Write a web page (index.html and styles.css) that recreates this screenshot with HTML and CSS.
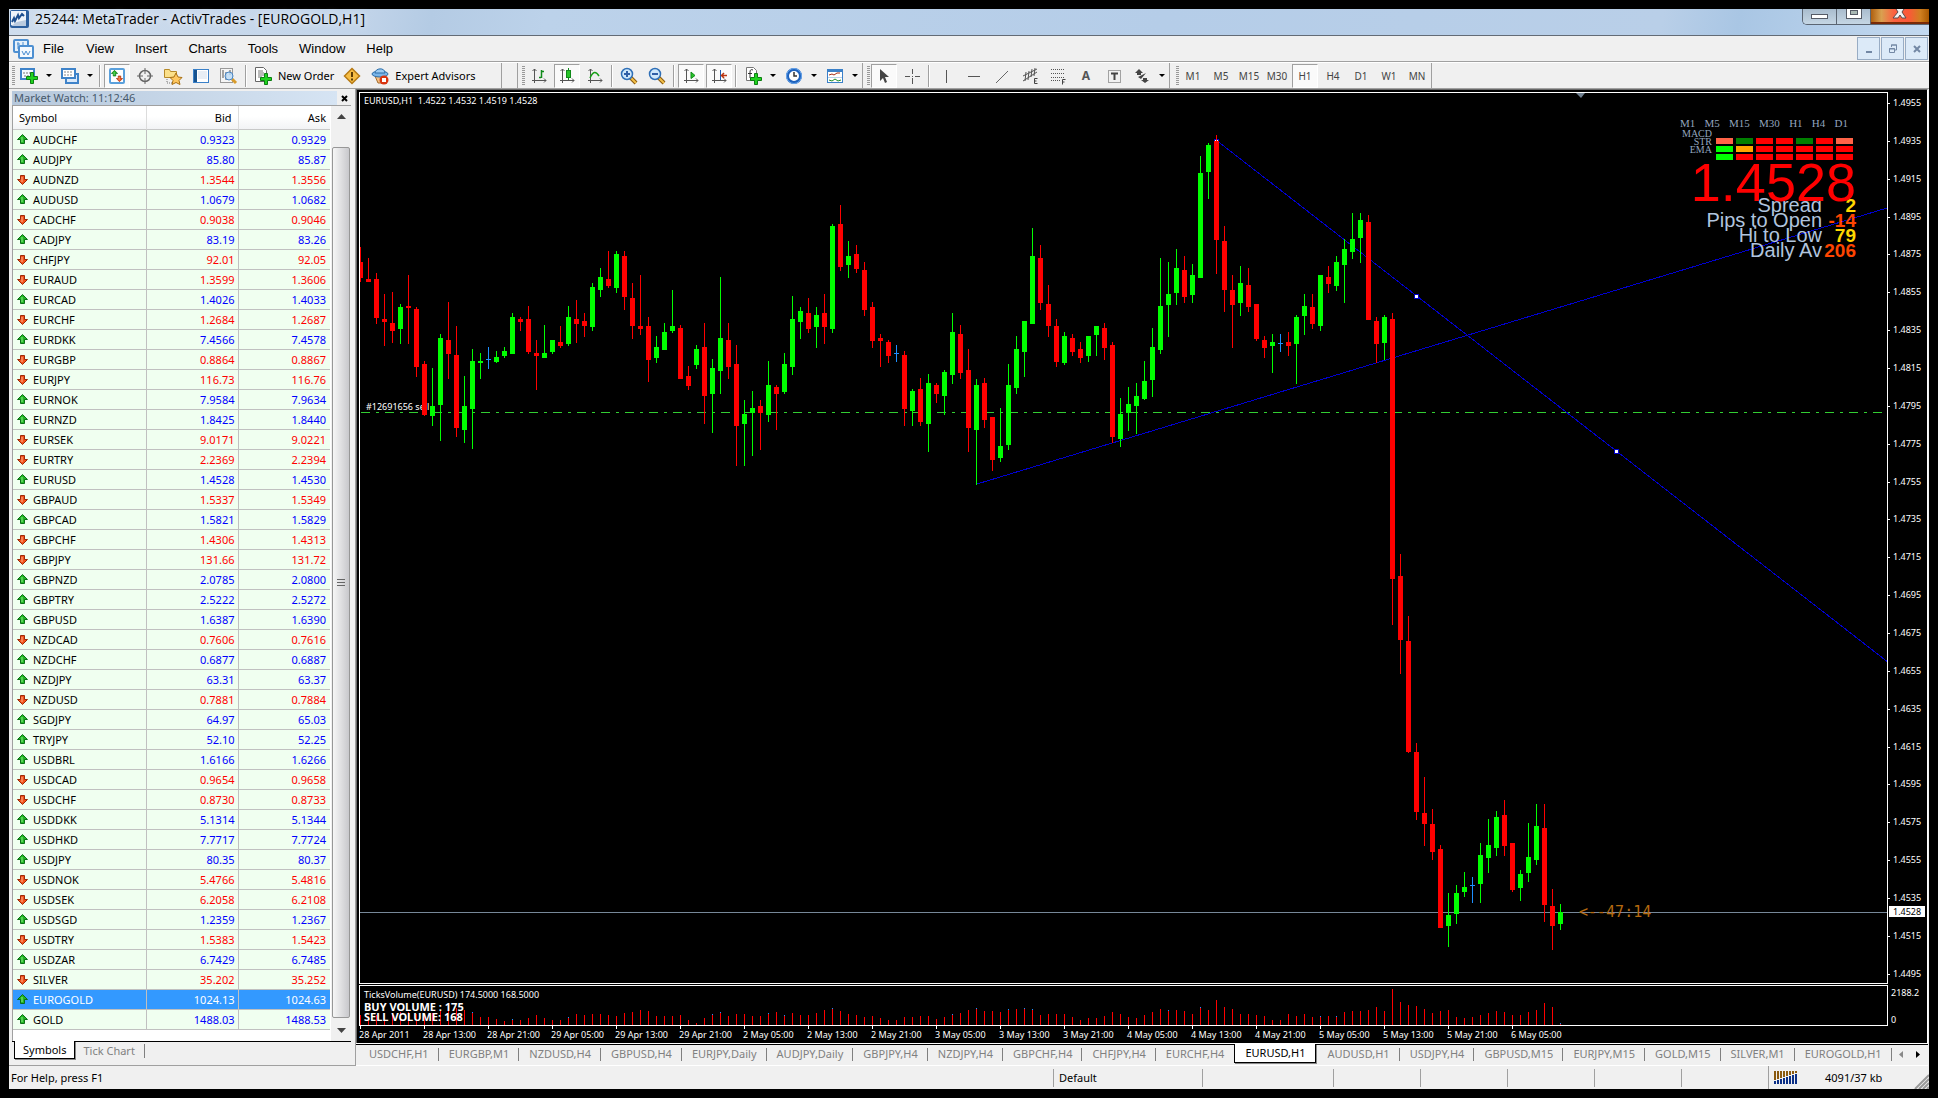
FILE: index.html
```html
<!DOCTYPE html>
<html lang="en">
<head>
<meta charset="utf-8">
<title>25244: MetaTrader - ActivTrades - [EUROGOLD,H1]</title>
<link rel="stylesheet" href="styles.css">
</head>
<body>
<svg class="defs" aria-hidden="true">
  <defs>
    <symbol id="up" viewBox="0 0 11 11"><path d="M5.500 .5 10.500 5.500H7.500V9.500H3.500V5.500H.5Z" fill="#22b522" stroke="#0b6e16"/><path d="M5 3v5" stroke="#8dee8d"/></symbol>
    <symbol id="down" viewBox="0 0 11 11"><path d="M5.500 10.500 .5 5.500H3.500V1.500H7.500V5.500H10.500Z" fill="#f2511b" stroke="#9c2b08"/><path d="M5 3v5" stroke="#ffb48d"/></symbol>
    <symbol id="plus" viewBox="0 0 12 12"><path d="M4.500 .5h3v4h4v3h-4v4h-3v-4h-4v-3h4z" fill="#1fd21f" stroke="#0c7d12"/></symbol>
    <symbol id="axes" viewBox="0 0 16 16"><path d="M3.500 1v14M1 12.500h14M1.500 3l2-2 2 2M13 10.500l2 2-2 2" fill="none" stroke="#555"/></symbol>
    <symbol id="lens" viewBox="0 0 18 18"><path d="M10.500 10.500l5.500 5.500" stroke="#8a5a10" stroke-width="4"/><path d="M10.500 10.500l5.500 5.500" stroke="#f3c04a" stroke-width="2"/><circle cx="7" cy="7" r="5.500" fill="#cfe8fb" stroke="#2f6fb7" stroke-width="1.500"/></symbol>
  </defs>
</svg>
<div class="window">
  <header class="titlebar">
    <svg class="app-icon" width="20" height="18" viewBox="0 0 20 18"><rect x="0" y="0" width="19" height="18" rx="2" fill="#2b5f9e"/><rect x="1" y="1" width="15" height="14" fill="#eef4fa"/><path d="M2 12l2-4 1 3 3-6 1 3 3-4 2 2" fill="none" stroke="#1d4f8f" stroke-width="2"/><path d="M1 16l6-4 9-2v6H1z" fill="#b9cbe0"/></svg>
    <h1 class="title">25244: MetaTrader - ActivTrades - [EUROGOLD,H1]</h1>
    <div class="win-buttons">
      <button class="win-btn" aria-label="Minimize"><svg width="18" height="14"><rect x=".5" y="5.500" width="16" height="4" fill="#fff" stroke="#555b66"/></svg></button>
      <button class="win-btn" aria-label="Maximize"><svg width="18" height="14"><rect x="1.500" y="-3.500" width="15" height="13" fill="#fff" stroke="#555b66"/><rect x="5.500" y="1.500" width="7" height="4" fill="#a9b9b4" stroke="#555b66"/></svg></button>
      <button class="win-btn win-close" aria-label="Close"><svg width="18" height="14"><path d="M3-3h4l2 3 2-3h4l-4 6 4 6h-4l-2-3-2 3H2l5-6z" fill="#f2f2f2" stroke="#5a4a4a"/></svg></button>
    </div>
  </header>

  <nav class="menubar">
    <svg class="menu-icon" width="22" height="20" viewBox="0 0 22 20"><rect x="1" y="1" width="14" height="12" rx="1" fill="#e6f1fb" stroke="#4d8fd1" stroke-width="2"/><path d="M5 3v7M10 3v7M4 5h3M9 8h3" stroke="#4d8fd1"/><rect x="6" y="7" width="14" height="12" rx="1" fill="#f4f9fe" stroke="#4d8fd1" stroke-width="2"/><path d="M9 12l2 4 2-4 2 4 2-4" fill="none" stroke="#4d8fd1"/></svg>
    <button class="menu">File</button><button class="menu">View</button><button class="menu">Insert</button><button class="menu">Charts</button><button class="menu">Tools</button><button class="menu">Window</button><button class="menu">Help</button>
    <div class="mdi">
      <button class="mdi-btn" aria-label="Minimize chart"><svg width="12" height="12"><path d="M3 9h6" stroke="#7388a5" stroke-width="2"/></svg></button>
      <button class="mdi-btn" aria-label="Restore chart"><svg width="12" height="12"><path d="M4.500 4v-2h5v5h-2M4 2h6M2.500 5.500h5v4h-5zM2 6h6" fill="none" stroke="#7388a5"/></svg></button>
      <button class="mdi-btn" aria-label="Close chart"><svg width="12" height="12"><path d="M3 3l6 6M9 3l-6 6" stroke="#7388a5" stroke-width="2"/></svg></button>
    </div>
  </nav>

  <div class="toolbars">
    <div class="toolbar toolbar-main">
      <i class="grip"></i>
      <button class="tool" aria-label="New chart"><svg width="20" height="18" viewBox="0 0 20 18"><rect x="2" y="2" width="13" height="10" fill="#f4f9ff" stroke="#3f83c9" stroke-width="2"/><path d="M4 6h8M5 9h6" stroke="#777" stroke-dasharray="2 1"/><use href="#plus" x="7" y="5" width="12" height="12"/></svg></button><button class="caret" aria-label="Chart list"></button>
      <button class="tool" aria-label="Profiles"><svg width="20" height="18" viewBox="0 0 20 18"><rect x="6" y="7" width="12" height="9" fill="#dceafa" stroke="#3f83c9" stroke-width="2"/><rect x="2" y="2" width="13" height="9" fill="#fff" stroke="#3f83c9" stroke-width="2"/><path d="M4 5h8M4 8h8" stroke="#888" stroke-dasharray="2 1"/></svg></button><button class="caret" aria-label="Profile list"></button>
      <i class="sep"></i>
      <button class="tool on" aria-label="Market Watch"><svg width="18" height="18" viewBox="0 0 18 18"><rect x="2" y="2" width="14" height="14" rx="1" fill="#fff" stroke="#5aa0dc" stroke-width="2"/><use href="#up" x="3" y="3" width="7" height="7"/><use href="#down" x="8" y="8" width="7" height="7"/></svg></button>
      <button class="tool" aria-label="Data Window"><svg width="18" height="18" viewBox="0 0 18 18"><circle cx="9" cy="9" r="5.500" fill="none" stroke="#666" stroke-width="1.500"/><path d="M9 1v6M9 11v6M1 9h6M11 9h6" stroke="#666"/></svg></button>
      <button class="tool" aria-label="Navigator"><svg width="20" height="18" viewBox="0 0 20 18"><path d="M1.500 2.500h5l1 2h6v6h-12z" fill="#fbe08a" stroke="#b68a2a"/><path d="M4 12v4h5" fill="none" stroke="#777" stroke-dasharray="1 1"/><path d="M13 6l2 4 4 .5-3 3 1 4-4-2-4 2 1-4-3-3 4-.5z" fill="#ffc860" stroke="#a86f12"/></svg></button>
      <button class="tool" aria-label="Terminal"><svg width="18" height="18" viewBox="0 0 18 18"><rect x="1.500" y="2.500" width="15" height="13" fill="#fff" stroke="#3a80c8"/><path d="M3.500 3v12" stroke="#16528f" stroke-width="3"/><path d="M6 5h9M6 7h9M6 9h9M6 11h9" stroke="#cfdcea"/></svg></button>
      <button class="tool" aria-label="Strategy Tester"><svg width="20" height="18" viewBox="0 0 20 18"><rect x="1.500" y="1.500" width="12" height="14" fill="#f5f5f5" stroke="#999"/><path d="M4 3v8M7 5v8M11 3v5" stroke="#555"/><path d="M13 12l4 4" stroke="#d89b2b" stroke-width="3"/><circle cx="10" cy="9" r="4" fill="#bcdcf7" fill-opacity=".8" stroke="#4a86c4"/></svg></button>
      <i class="sep"></i>
      <button class="tool wide"><svg width="20" height="18" viewBox="0 0 20 18"><path d="M2.500.5h8l3 3v11h-11z" fill="#fff" stroke="#666"/><path d="M5 4h5M5 6h6M5 8h6M5 10h4" stroke="#777"/><use href="#plus" x="7" y="6" width="12" height="12"/></svg>New Order</button>
      <button class="tool" aria-label="MetaEditor"><svg width="18" height="18" viewBox="0 0 18 18"><path d="M9 1.500 16.500 9 9 16.500 1.500 9z" fill="#f6bd45" stroke="#b77a15" stroke-width="1.500"/><path d="M9 5v5M9 11.500v2" stroke="#5d3c05" stroke-width="2"/></svg></button>
      <button class="tool wide"><svg width="20" height="18" viewBox="0 0 20 18"><path d="M5 9h11l-3 7H8z" fill="#f3c083" stroke="#a46a2a"/><ellipse cx="10" cy="7" rx="8" ry="3" fill="#79b5e8" stroke="#2c6da8"/><path d="M5 6c0-5 10-6 10 0z" fill="#9ccbf2" stroke="#2c6da8"/><circle cx="14" cy="13" r="4.500" fill="#d93410"/><rect x="12" y="11" width="4" height="4" fill="#fff"/></svg>Expert Advisors</button>
    </div>
    <div class="toolbar">
      <i class="grip"></i>
      <button class="tool" aria-label="Bar chart"><svg width="16" height="16" viewBox="0 0 16 16"><use href="#axes" width="16" height="16"/><path d="M10.500 2v8M8 9.500h2M11 3.500h2" stroke="#108a1a" stroke-width="1.500"/></svg></button>
      <button class="tool on" aria-label="Candlesticks"><svg width="16" height="16" viewBox="0 0 16 16"><use href="#axes" width="16" height="16"/><path d="M9.500 0v12" stroke="#108a1a"/><rect x="7.500" y="2.500" width="4" height="7" fill="#27c427" stroke="#108a1a"/></svg></button>
      <button class="tool" aria-label="Line chart"><svg width="16" height="16" viewBox="0 0 16 16"><use href="#axes" width="16" height="16"/><path d="M3 10c3-7 6-7 9-2" fill="none" stroke="#18a018" stroke-width="1.500"/></svg></button>
      <i class="sep"></i>
      <button class="tool" aria-label="Zoom in"><svg width="18" height="18" viewBox="0 0 18 18"><use href="#lens" width="18" height="18"/><path d="M4 7h6M7 4v6" stroke="#2f5fa7" stroke-width="2"/></svg></button>
      <button class="tool" aria-label="Zoom out"><svg width="18" height="18" viewBox="0 0 18 18"><use href="#lens" width="18" height="18"/><path d="M4 7h6" stroke="#2f5fa7" stroke-width="2"/></svg></button>
      <i class="sep"></i>
      <button class="tool on" aria-label="Auto scroll"><svg width="16" height="16" viewBox="0 0 16 16"><use href="#axes" width="16" height="16"/><path d="M8 4l4 3.500-4 3z" fill="#27c427" stroke="#108a1a"/></svg></button>
      <button class="tool on" aria-label="Chart shift"><svg width="16" height="16" viewBox="0 0 16 16"><use href="#axes" width="16" height="16"/><path d="M9.500 2v10" stroke="#1b5bb0"/><path d="M11 7.500h5M13 5l-2.500 2.500 2.500 2.500" fill="none" stroke="#b83410" stroke-width="1.500"/></svg></button>
      <i class="sep"></i>
      <button class="tool" aria-label="Indicators"><svg width="18" height="18" viewBox="0 0 18 18"><path d="M2.500.5h7l3 3v10h-10z" fill="#fff" stroke="#777"/><path d="M9 3c-2-1-3 0-3 2v6M4 6.500h4" fill="none" stroke="#333"/><use href="#plus" x="6" y="6" width="12" height="12"/></svg></button><button class="caret" aria-label="Indicator list"></button>
      <button class="tool" aria-label="Periods"><svg width="18" height="18" viewBox="0 0 18 18"><circle cx="9" cy="9" r="6.500" fill="#fff" stroke="#1e62bd" stroke-width="3"/><circle cx="9" cy="9" r="7.500" fill="none" stroke="#6aa8ee"/><path d="M9 5v4h3" fill="none" stroke="#333" stroke-width="1.500"/></svg></button><button class="caret" aria-label="Period list"></button>
      <button class="tool" aria-label="Templates"><svg width="18" height="16" viewBox="0 0 18 16"><rect x="1.500" y="1.500" width="15" height="13" fill="#fff" stroke="#3a80c8"/><path d="M1 3h16" stroke="#3a80c8" stroke-width="2"/><path d="M2 9.500h14" stroke="#b9d2ea"/><path d="M3 7l3-1 2 1 3-2 3 0" fill="none" stroke="#a32c16"/><path d="M3 12l3 1 3-2 3 2 3-1" fill="none" stroke="#1f8f2a"/></svg></button><button class="caret" aria-label="Template list"></button>
    </div>
    <div class="toolbar">
      <i class="grip"></i>
      <button class="tool on" aria-label="Cursor"><svg width="12" height="16" viewBox="0 0 12 16"><path d="M2 1v12l3-3 2 5 2-1-2-5h4z" fill="#444"/></svg></button>
      <button class="tool" aria-label="Crosshair"><svg width="16" height="16" viewBox="0 0 16 16"><path d="M8.500 1v5M8.500 10v6M1 8.500h5M11 8.500h5M8 8.500h1" stroke="#555"/></svg></button>
      <i class="sep"></i>
      <button class="tool" aria-label="Vertical line"><svg width="16" height="16"><path d="M8.500 2v13" stroke="#555"/></svg></button>
      <button class="tool" aria-label="Horizontal line"><svg width="16" height="16"><path d="M2 8.500h12" stroke="#555"/></svg></button>
      <button class="tool" aria-label="Trendline"><svg width="16" height="16"><path d="M2 15L14 3" stroke="#666"/></svg></button>
      <button class="tool" aria-label="Equidistant channel"><svg width="17" height="18" viewBox="0 0 17 18"><path d="M1 9l14-7M1 14l14-9M4 5l-1 9M7 4l-1 9M10 2l-1 8M13 1l-1 8" stroke="#555"/><path d="M15.500 11.500h-3v5h3M12.500 14h2" fill="none" stroke="#444"/></svg></button>
      <button class="tool" aria-label="Fibonacci retracement"><svg width="17" height="18" viewBox="0 0 17 18"><path d="M1 2.500h14M1 6.500h14M1 10.500h14M1 13.500h9" stroke="#555" stroke-dasharray="1 1"/><path d="M15.500 12.500h-3v5M12.500 15h2" fill="none" stroke="#444"/></svg></button>
      <button class="tool letter">A</button>
      <button class="tool" aria-label="Text label"><svg width="16" height="16" viewBox="0 0 16 16"><rect x="2.500" y="2.500" width="12" height="12" fill="none" stroke="#555" stroke-dasharray="1 1"/><path d="M5 5.500h7M8.500 5v7" stroke="#444" stroke-width="2"/></svg></button>
      <button class="tool" aria-label="Arrows"><svg width="16" height="16" viewBox="0 0 16 16"><path d="M5 1l4 4H7v2H3V5H1zM11 15l-4-3h2v-2h4v2h2zM4 9l3 2 5-6" fill="#444"/></svg></button><button class="caret" aria-label="Arrow list"></button>
    </div>
    <div class="toolbar periods">
      <i class="grip"></i>
      <button class="tool">M1</button><button class="tool">M5</button><button class="tool">M15</button><button class="tool">M30</button><button class="tool on">H1</button><button class="tool">H4</button><button class="tool">D1</button><button class="tool">W1</button><button class="tool">MN</button>
    </div>
  </div>

  <main class="workspace">
    <aside class="watch">
      <div class="watch-title"><h2>Market Watch: 11:12:46</h2><button class="watch-close" aria-label="Close Market Watch"><svg width="7" height="7"><path d="M1 1l5 5M6 1l-5 5" stroke="#000" stroke-width="2"/></svg></button></div>
      <div class="watch-body">
        <div class="quotes-wrap">
          <table class="quotes">
            <thead><tr><th>Symbol</th><th>Bid</th><th>Ask</th></tr></thead>
            <tbody id="quotes"></tbody>
          </table>
        </div>
        <div class="scroll">
          <svg width="9" height="5"><path d="M0 5l4.500-5L9 5z" fill="#444"/></svg>
          <div class="thumb"><i></i></div>
          <svg width="9" height="5"><path d="M0 0l4.500 5L9 0z" fill="#444"/></svg>
        </div>
      </div>
      <div class="watch-tabs"><button class="wtab current">Symbols</button><button class="wtab">Tick Chart</button></div>
    </aside>

    <section class="charts">
      <div class="chart">
        <div class="pane price-pane">
          <svg class="plot" id="price-plot"></svg>
          <div class="caption">EURUSD,H1&nbsp; 1.4522 1.4532 1.4519 1.4528</div>
          <div class="hud">
            <div class="hud-frames"><span>M1</span><span>M5</span><span>M15</span><span>M30</span><span>H1</span><span>H4</span><span>D1</span></div>
            <div class="hud-signals">
              <div class="hud-names"><span>MACD</span><span>STR</span><span>EMA</span></div>
              <div class="hud-cells">
                <i class="tomato"></i><i class="green"></i><i></i><i></i><i class="green"></i><i></i><i class="tomato"></i>
                <i class="lime"></i><i class="orange"></i><i></i><i></i><i></i><i></i><i></i>
                <i class="lime"></i><i></i><i></i><i></i><i></i><i></i><i></i>
              </div>
            </div>
            <div class="hud-price">1.4528</div>
            <dl class="hud-stats">
              <dt>Spread</dt><dd class="gold">2</dd>
              <dt>Pips to Open</dt><dd>-14</dd>
              <dt>Hi to Low</dt><dd class="gold">79</dd>
              <dt>Daily Av</dt><dd>206</dd>
            </dl>
          </div>
        </div>
        <div class="price-axis" id="price-axis"><span class="bid-tag">1.4528</span></div>
        <div class="pane volume-pane">
          <svg class="plot" id="volume-plot"></svg>
          <div class="caption">TicksVolume(EURUSD) 174.5000 168.5000</div>
          <div class="volumes"><span>BUY VOLUME : 175</span><span>SELL VOLUME: 168</span></div>
        </div>
        <div class="volume-axis"><span>2188.2</span><span>0</span></div>
        <div class="time-axis" id="time-axis"></div>
      </div>
      <nav class="chart-tabs">
        <button>USDCHF,H1</button><button>EURGBP,M1</button><button>NZDUSD,H4</button><button>GBPUSD,H4</button><button>EURJPY,Daily</button><button>AUDJPY,Daily</button><button>GBPJPY,H4</button><button>NZDJPY,H4</button><button>GBPCHF,H4</button><button>CHFJPY,H4</button><button class="before">EURCHF,H4</button><button class="current">EURUSD,H1</button><button>AUDUSD,H1</button><button>USDJPY,H4</button><button>GBPUSD,M15</button><button>EURJPY,M15</button><button>GOLD,M15</button><button>SILVER,M1</button><button>EUROGOLD,H1</button>
        <span class="tab-arrows"><svg width="4" height="7"><path d="M4 0v7L0 3.500z" fill="#888"/></svg><svg width="4" height="7"><path d="M0 0v7l4-3.500z" fill="#000"/></svg></span>
      </nav>
    </section>
  </main>

  <footer class="status">
    <span class="help">For Help, press F1</span>
    <span class="s-profile">Default</span><span class="s-date"></span><span class="s-price"></span><span class="s-price"></span><span class="s-price"></span><span class="s-price"></span><span class="s-price"></span>
    <span class="s-net"><svg width="24" height="13" viewBox="0 0 24 13"><path d="M1 0v9M4 0v8M7 0v7M10 0v6M13 0v5M16 0v4M19 0v3M22 0v2" stroke="#8a5a10" stroke-width="2"/><path d="M1 10v3M4 9v4M7 8v5M10 7v6M13 6v7M16 5v8M19 4v9M22 3v10" stroke="#0b2f86" stroke-width="2"/></svg>4091/37 kb<svg class="resize" width="15" height="15"><path d="M1 15L15 1M5 15L15 5M9 15l6-6M13 15l2-2" stroke="#999" stroke-width="2"/></svg></span>
  </footer>
</div>
<script src="chart.js"></script>
</body>
</html>
```
FILE: styles.css
```css
* { box-sizing: border-box; }
body {
  margin: 0; padding: 9px; min-height: 100vh; background: #000; color: #000;
  display: flex; font: 11px/14px "Noto Sans", "Open Sans", sans-serif;
}
button { font: inherit; color: inherit; background: none; border: 0; padding: 0; margin: 0; }
h1, h2, dl, dd { margin: 0; font-weight: normal; }
svg { display: block; flex: none; }
.defs { position: absolute; width: 0; height: 0; }
.window { flex: 1; min-width: 0; display: flex; flex-direction: column; background: #f0f0f0; }

.titlebar {
  height: 27px; display: flex; align-items: flex-start; border-bottom: 1px solid #636b75;
  background: linear-gradient(100deg, #cfdded 0, #c3d5ea 18%, #b4cbe4 22%, #bcd2ea 28%, #b5cde8 60%, #b9cfe8 86%, #a9c6e4 90%, #c3d9f0 100%);
}
.app-icon { margin: 1px 0 0 1px; }
.title { padding: 0 8px; margin-left: -3px; font-family: "Open Sans", "Noto Sans", sans-serif; font-size: 14px; line-height: 20px; text-shadow: 0 0 6px #fff; }
.win-buttons { margin-left: auto; display: flex; height: 16px; border: 1px solid #5b6572; border-top: 0; border-right: 0; border-radius: 0 0 0 5px; overflow: hidden; }
.win-btn { width: 34px; display: flex; justify-content: center; background: linear-gradient(#a9bccd, #c5d6e4); border-right: 1px solid #5b6572; }
.win-close { width: 58px; border-right: 0; background: linear-gradient(90deg, #b06010, #d9a050 18%, #fb6040 40%, #fb5838 65%, #d08020 85%, #a85800); border-bottom: 2px solid #7a2a08; }

.menubar { height: 26px; display: flex; align-items: center; border-bottom: 1px solid #a0a0a0; font-family: "Liberation Sans", Arial, sans-serif; font-size: 13px; }
.menu-icon { margin: 0 0 0 4px; }
.menu { padding: 0 10px; margin-right: 1px; }
.menu-icon + .menu { margin-left: -2px; margin-right: 2px; }
.mdi { margin-left: auto; display: flex; gap: 1px; padding-right: 1px; }
.mdi-btn { width: 23px; height: 23px; display: grid; place-items: center; background: #dceaf8; border: 1px solid #98acc4; }

.toolbars { height: 27px; display: flex; border-top: 1px solid #fff; border-bottom: 1px solid #a0a0a0; }
.toolbar { display: flex; align-items: center; border-right: 1px solid #a0a0a0; padding-left: 4px; white-space: nowrap; }
.toolbar-main { flex: 0 0 493px; margin-right: 15px; padding-left: 3px; }
.toolbar-main + .toolbar { border-left: 1px solid #a0a0a0; }
.toolbar + .periods { margin-left: 2px; }
.grip { width: 3px; height: 20px; background: repeating-linear-gradient(#999 0 1px, #f0f0f0 1px 2px); }
.sep { width: 2px; height: 22px; margin: 0 2px; border-left: 1px solid #a0a0a0; border-right: 1px solid #fff; }
.tool { width: 26px; height: 24px; margin: 0 1px; display: flex; align-items: center; justify-content: center; border: 1px solid transparent; }
.tool.on { background: #fafafa; border-color: #a0a0a0 #fff #fff #a0a0a0; }
.tool.wide { width: auto; padding: 0 2px; gap: 5px; }
.caret { width: 12px; height: 24px; margin-right: 1px; display: grid; place-items: center; }
.caret::before { content: ""; border: 3px solid transparent; border-top: 3px solid #000; border-bottom: 0; }
.letter { font-weight: bold; font-size: 12px; color: #555; }
.periods { font-size: 10px; color: #444; }

.workspace { flex: 1; display: flex; min-height: 0; }
.watch { flex: 0 0 346px; display: flex; flex-direction: column; padding: 2px 4px 2px 3px; border-bottom: 1px solid #a0a0a0; }
.watch-title { display: flex; height: 14px; align-items: center; }
.watch-title h2 { flex: 1; padding-left: 2px; font-size: 11px; line-height: 14px; color: #46586a; background: linear-gradient(90deg, #b6c8dc, #d6e4f3); }
.watch-close { width: 14px; display: grid; place-items: center; }
.watch-body { flex: 1; display: flex; border-top: 1px solid #a0a0a0; border-left: 1px solid #a0a0a0; background: #fff; }
.quotes-wrap { flex: 1; }
.quotes { width: 100%; table-layout: fixed; border-collapse: separate; border-spacing: 0; }
.quotes th { height: 24px; padding: 0 6px; font-weight: normal; text-align: right; background: linear-gradient(#fff 45%, #f2f3f5); border-right: 1px solid #dcdcdc; border-bottom: 1px solid #c8c8c8; }
.quotes th:first-child { width: 134px; text-align: left; }
.quotes td { height: 20px; padding: 0 3px 0 4px; text-align: right; background: #f0fff0; border-right: 1px solid #c0c0c0; border-bottom: 1px solid #c0c0c0; color: #00f; }
.quotes th:last-child, .quotes td:last-child { border-right: 0; padding-right: 4px; }
.quotes td:first-child { text-align: left; color: #000; }
.quotes .fall td + td { color: #f00; }
.quotes .selected td, .quotes .selected td:first-child { background: #3399ff; color: #fff; }
.symbol { display: flex; align-items: center; gap: 5px; }
.scroll { width: 20px; margin-left: 1px; padding: 8px 0 8px; background: #f0f0f0; display: flex; flex-direction: column; align-items: center; }
.thumb { flex: 1; width: 18px; margin: 28px 0 10px; border: 1px solid #979797; border-radius: 2px; background: linear-gradient(90deg, #f6f6f6, #e2e2e4 45%, #c8c8cc); display: grid; place-items: center; }
.thumb i { width: 8px; height: 8px; background: repeating-linear-gradient(#666 0 1px, transparent 1px 3px); }
.watch-tabs { height: 22px; display: flex; align-items: flex-start; border-top: 1px solid #000; color: #808080; }
.wtab { height: 14px; padding: 0 9px 0 8px; margin-top: 2px; border-right: 1px solid #808080; }
.wtab.current { height: 18px; margin: -1px 0 0 2px; padding: 0 8px; line-height: 18px; color: #000; background: #fff; border: 1px solid #000; border-top: 0; box-shadow: 1px 1px 0 #888; }

.charts { flex: 1; min-width: 0; display: flex; flex-direction: column; border-left: 1px solid #a0a0a0; padding-right: 1px; }
.chart {
  flex: 1; display: grid; grid-template-columns: 1fr 39px; grid-template-rows: 1fr 41px 16px; row-gap: 1px;
  background: #000; color: #fff; padding: 2px 0 0 2px; border-top: 1px solid #696969; border-left: 1px solid #696969; border-right: 1px solid #fff;
  font-size: 9px; line-height: 12px;
}
.pane { position: relative; border: 1px solid #fff; overflow: hidden; }
.plot { position: absolute; left: 0; top: 0; width: 100%; height: 100%; }
.caption { position: absolute; left: 4px; top: 2px; white-space: pre; }
.volume-pane .caption { top: 3px; }
.volumes { position: absolute; left: 4px; top: 16px; display: flex; flex-direction: column; font-size: 11px; line-height: 10px; font-weight: bold; }
.price-axis { position: relative; padding: 5px 0 4px 5px; display: flex; flex-direction: column; justify-content: space-between; }
.price-axis > span:not(.bid-tag)::before { content: ""; float: left; width: 2px; height: 1px; margin: 6px 0 0 -5px; background: #fff; }
.bid-tag { position: absolute; left: 1px; bottom: 67px; width: 36px; padding-left: 4px; line-height: 11px; background: #fff; color: #000; }
.volume-axis { padding: 2px 0 0 3px; display: flex; flex-direction: column; justify-content: space-between; }
.time-axis { grid-column: 1 / -1; display: flex; overflow: hidden; margin-top: -1px; }
.time-axis span { flex: 0 0 64px; white-space: nowrap; }
.time-axis span::before { content: ""; display: block; width: 1px; height: 3px; margin-left: 1px; background: #fff; }

.hud { position: absolute; top: 23px; right: 31px; width: 180px; text-align: right; font-family: "Liberation Sans", Arial, sans-serif; color: #b0c4de; }
.hud-frames { display: flex; justify-content: space-between; padding: 0 8px 0 4px; font: 11px/14px "Liberation Serif", serif; color: #93a5bf; }
.hud-signals { display: flex; justify-content: flex-end; gap: 4px; padding-right: 3px; }
.hud-names { display: flex; flex-direction: column; font: 10px/8px "Liberation Serif", serif; color: #93a5bf; }
.hud-cells { display: grid; grid-template-columns: repeat(7, 17px); grid-auto-rows: 6px; gap: 2px 3px; padding-top: 8px; }
.hud-cells i { background: #f00; }
.hud-cells .tomato { background: #ff6347; }
.hud-cells .green { background: #008000; }
.hud-cells .lime { background: #0f0; }
.hud-cells .orange { background: #ffa500; }
.hud-price { position: relative; z-index: 1; font-size: 54px; line-height: 45px; color: #f00; }
.hud-stats { display: grid; grid-template-columns: 1fr 34px; font-size: 20px; line-height: 15px; margin-top: -7px; }
.hud-stats dd { font-size: 19px; font-weight: bold; color: #ff4500; display: flex; justify-content: flex-end; }
.hud-stats .gold { color: #ffd700; }

.up { fill: #0f0; } .dn { fill: #f00; } .doji { fill: #1e90ff; }
.trend { stroke: #0000cd; shape-rendering: crispEdges; }
.handle { fill: #fff; stroke: #0000cd; }
.order { stroke: #32cd32; stroke-dasharray: 9 6 3 6; }
.bid { stroke: #778899; }
.order-text { fill: #fff; font-size: 9px; }
.timer { fill: #b5690f; font: 15px "DejaVu Sans Mono", monospace; }
.shift { fill: #708090; }

.chart-tabs { height: 23px; display: flex; border-top: 1px solid #fff; border-bottom: 1px solid #fff; color: #808080; white-space: nowrap; position: relative; padding-left: 3px; box-shadow: inset 0 1px 0 #000; }
.chart-tabs button { padding: 2px 9px 3px 10px; display: flex; align-items: center; line-height: 14px; }
.chart-tabs button::after { content: ""; width: 1px; height: 13px; background: #808080; margin: 0 -10px 0 9px; }
.chart-tabs button + button { margin-left: 1px; }
.chart-tabs .current { color: #000; background: #fff; border: 1px solid #000; border-top: 0; height: 19px; padding: 2px 10px; box-shadow: 1px 1px 0 #888; }
.chart-tabs .current::after, .chart-tabs .before::after { display: none; }
.tab-arrows { margin: 7px 8px 0 auto; display: flex; gap: 13px; }

.status { height: 23px; display: flex; align-items: center; }
.status > span { height: 18px; display: flex; align-items: center; border-left: 1px solid #a0a0a0; padding-left: 5px; }
.status .help { flex: 1; border: 0; padding-left: 2px; }
.s-profile { flex: 0 0 149px; }
.s-date { flex: 0 0 131px; }
.s-price { flex: 0 0 87px; }
.status .s-net { flex: 0 0 161px; gap: 27px; height: 23px; position: relative; }
.resize { margin-left: auto; align-self: flex-end; }
```
FILE: chart.js
```js
const quotes = `AUDCHF 0.9323 0.9329 +|AUDJPY 85.80 85.87 +|AUDNZD 1.3544 1.3556 -|AUDUSD 1.0679 1.0682 +|CADCHF 0.9038 0.9046 -|CADJPY 83.19 83.26 +|CHFJPY 92.01 92.05 -|EURAUD 1.3599 1.3606 -|EURCAD 1.4026 1.4033 +|EURCHF 1.2684 1.2687 -|EURDKK 7.4566 7.4578 +|EURGBP 0.8864 0.8867 -|EURJPY 116.73 116.76 -|EURNOK 7.9584 7.9634 +|EURNZD 1.8425 1.8440 +|EURSEK 9.0171 9.0221 -|EURTRY 2.2369 2.2394 -|EURUSD 1.4528 1.4530 +|GBPAUD 1.5337 1.5349 -|GBPCAD 1.5821 1.5829 +|GBPCHF 1.4306 1.4313 -|GBPJPY 131.66 131.72 -|GBPNZD 2.0785 2.0800 +|GBPTRY 2.5222 2.5272 +|GBPUSD 1.6387 1.6390 +|NZDCAD 0.7606 0.7616 -|NZDCHF 0.6877 0.6887 +|NZDJPY 63.31 63.37 +|NZDUSD 0.7881 0.7884 -|SGDJPY 64.97 65.03 +|TRYJPY 52.10 52.25 +|USDBRL 1.6166 1.6266 +|USDCAD 0.9654 0.9658 -|USDCHF 0.8730 0.8733 -|USDDKK 5.1314 5.1344 +|USDHKD 7.7717 7.7724 +|USDJPY 80.35 80.37 +|USDNOK 5.4766 5.4816 -|USDSEK 6.2058 6.2108 -|USDSGD 1.2359 1.2367 +|USDTRY 1.5383 1.5423 -|USDZAR 6.7429 6.7485 +|SILVER 35.202 35.252 -|EUROGOLD 1024.13 1024.63 +|GOLD 1488.03 1488.53 +`;

document.getElementById('quotes').innerHTML = quotes.split('|').map(line => {
  const [name, bid, ask, dir] = line.split(' ');
  const cls = (dir === '-' ? 'fall' : 'rise') + (name === 'EUROGOLD' ? ' selected' : '');
  const icon = dir === '-' ? 'down' : 'up';
  return `<tr class="${cls}"><td><span class="symbol"><svg width="11" height="11"><use href="#${icon}"/></svg>${name}</span></td><td>${bid}</td><td>${ask}</td></tr>`;
}).join('');

// Each candle: direction, high, body top, body bottom, low.
const candles = `R 247 262 278 282|R 258 279 282 282|R 273 279 318 324|R 294 319 322 346|R 292 323 331 343|G 304 307 329 344|R 275 306 308 344|R 307 309 367 377|R 361 364 415 416|G 368 406 416 426
G 334 338 405 441|R 302 340 354 379|R 326 355 428 437|G 376 406 430 443|G 349 361 409 449|G 353 361 363 379|B 347 359 360 369|G 351 357 362 363|G 347 351 356 358|G 313 317 354 354
R 317 319 322 331|R 306 319 352 354|R 340 353 356 390|G 325 353 358 358|G 340 340 352 354|R 326 342 346 348|G 306 317 344 346|R 300 319 324 343|R 313 321 326 337|G 283 287 327 331
G 268 277 290 297|R 251 279 286 288|G 251 254 288 293|R 251 256 297 310|R 283 298 326 339|R 275 326 329 335|R 317 326 360 382|G 336 347 358 363|G 323 332 350 350|G 290 326 331 333
R 325 328 379 379|R 366 376 386 390|G 345 349 365 369|R 323 347 396 424|G 359 368 394 433|G 277 338 371 394|R 323 340 367 379|R 345 364 426 466|G 400 414 424 466|G 391 408 413 456
R 400 406 413 450|G 361 385 415 422|R 385 387 394 430|G 353 364 392 394|G 296 319 367 375|G 307 311 322 339|R 298 313 329 333|G 307 315 327 348|R 294 313 327 344|G 224 226 329 333
R 205 224 267 271|G 241 256 265 278|R 245 254 269 273|R 262 270 310 316|R 302 307 341 348|R 334 338 341 367|R 340 342 356 363|B 345 353 354 362|R 351 355 409 426|G 389 391 411 426
R 378 389 422 426|G 374 383 424 452|R 383 385 394 403|G 370 372 396 415|G 313 332 375 384|R 325 334 373 379|R 349 370 428 452|G 379 385 430 485|R 378 383 420 428|R 417 417 460 471
G 408 446 458 462|G 364 385 445 450|G 336 349 388 394|G 321 321 352 377|G 228 256 324 324|R 245 258 303 310|R 285 304 326 337|R 319 326 362 367|G 332 336 363 365|R 334 338 352 356
R 342 349 358 363|G 336 336 356 362|G 326 326 335 356|R 323 328 348 360|R 342 345 437 443|G 398 414 439 447|G 387 404 413 431|G 383 396 406 434|G 361 381 399 400|G 328 347 380 397
G 258 306 350 354|G 262 294 305 337|G 249 268 293 305|R 256 270 297 303|G 264 275 295 303|G 156 173 278 278|G 143 145 172 199|R 135 141 240 274|R 226 241 290 312|R 275 290 305 348
G 266 283 303 316|R 268 285 307 312|R 304 304 339 341|R 336 340 348 358|G 334 342 346 373|B 334 343 344 352|R 332 342 346 356|G 315 317 344 384|G 294 306 316 335|R 294 307 324 329
G 275 275 326 331|R 266 277 284 293|G 256 262 286 291|G 239 249 265 303|G 213 239 252 259|G 213 220 238 263|R 215 222 320 320|R 317 321 344 363|G 315 317 343 360|R 313 319 579 625
R 554 576 640 674|R 616 641 752 753|R 743 752 812 820|R 777 813 824 846|R 809 824 852 860|R 845 849 928 928|G 893 915 926 947|G 885 893 914 924|G 872 887 892 897|B 877 885 886 903
G 843 855 884 903|G 819 845 858 873|G 811 817 848 856|R 800 815 846 856|R 843 843 890 892|G 870 874 888 901|G 823 857 873 882|G 804 826 860 865|R 804 828 905 922|R 889 906 926 950
G 904 912 924 930`.split(/[|\n]/);

const kinds = { R: 'dn', G: 'up', B: 'doji' };
const bars = candles.map((line, i) => {
  const [kind, high, top, bottom, low] = line.split(' ');
  const x = 360 + i * 8;
  return `<g class="${kinds[kind]}"><rect x="${x}" y="${high}" width="1" height="${low - high}"/><rect x="${x - 2}" y="${top}" width="5" height="${bottom - top}"/></g>`;
}).join('');

document.getElementById('price-plot').innerHTML = `<g transform="translate(-360 -93)">
<path class="shift" d="M1576 93h9l-4 5z"/>
<text class="order-text" x="366" y="410">#12691656 sell</text>
<path class="order" d="M361 412.500H4000"/>
<path class="bid" d="M360 912.500H4000"/>
<path class="trend" fill="none" d="M977 484L2187 117M1216 140L2216 917"/>
<rect class="handle" x="1214.500" y="139.500" width="4" height="4"/>
${bars}
<rect class="handle" x="1414.500" y="294.500" width="4" height="4"/><rect class="handle" x="1614.500" y="449.500" width="4" height="4"/>
<text class="timer" x="1579" y="917">&lt;--47:14</text></g>`;

// Tick volume per bar in pixels; a trailing b marks a buy tip.
const volume = `10 9 10 12 12 13 13 11 10 12 14 15 17 15 13b 8 8 6 4 6b 5 7 10 7 5 5 8b 11 10 11 11 10 9 12 13 15 14 9 9 9 10 5 2 7 11b 13b 9 11 11 9 9 12b 13 10b 12 10 10 12 15 17b 14 11 10 8 9 7 5 5 8 8 9 9 6 8 11b 12 15 17b 14 14 13 16b 16 17b 16b 10 11 11 11 8 5 7 7 9 13 11 8 7 10 13 16 15b 15 14 11 18b 15 25 18 16 11 11 10 9 5 5 11 9 11 8 9b 9 9b 13 14 14 15 18 14 36 23 20 19 16 12 14 15 8 7 8 10 12 14 13 10 10 13 15 22 18 2b`.split(' ');
document.getElementById('volume-plot').innerHTML = volume.map((v, i) => {
  const h = parseInt(v, 10);
  const tip = v.endsWith('b') ? `<rect class="doji" x="${i * 8}" y="${39 - h}" width="1" height="1"/>` : '';
  return `<rect class="dn" x="${i * 8}" y="${39 - h}" width="1" height="${h}"/>${tip}`;
}).join('');

const axis = document.getElementById('price-axis');
for (let p = 14955; p >= 14495; p -= 20) {
  const label = document.createElement('span');
  label.textContent = (p / 10000).toFixed(4);
  axis.append(label);
}

document.getElementById('time-axis').innerHTML = ['28 Apr 2011', '28 Apr 13:00', '28 Apr 21:00', '29 Apr 05:00', '29 Apr 13:00', '29 Apr 21:00', '2 May 05:00', '2 May 13:00', '2 May 21:00', '3 May 05:00', '3 May 13:00', '3 May 21:00', '4 May 05:00', '4 May 13:00', '4 May 21:00', '5 May 05:00', '5 May 13:00', '5 May 21:00', '6 May 05:00'].map(t => `<span>${t}</span>`).join('');
```
